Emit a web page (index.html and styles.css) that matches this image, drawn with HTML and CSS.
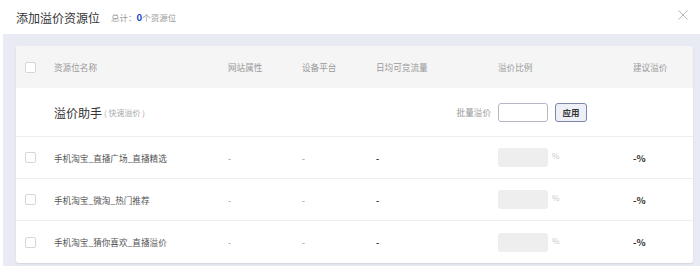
FILE: index.html
```html
<!DOCTYPE html>
<html lang="zh-CN">
<head>
  <meta charset="UTF-8">
  <title>添加溢价资源位</title>
  <link rel="stylesheet" href="styles.css">
</head>
<body>
  <div class="dialog-head">
    <span class="title">添加溢价资源位</span>
    <span class="count">总计：<b>0</b>个资源位</span>
    <span class="close">
      <svg width="10" height="10" viewBox="0 0 10 10"><path d="M0.5 0.5L9.5 9.5M9.5 0.5L0.5 9.5" stroke="#b8b8b8" stroke-width="1"/></svg>
    </span>
  </div>
  <div class="dialog-body">
    <div class="card">
      <div class="row head">
        <div class="cell"><span class="check"></span></div>
        <div class="cell">资源位名称</div>
        <div class="cell">网站属性</div>
        <div class="cell">设备平台</div>
        <div class="cell">日均可竞流量</div>
        <div class="cell">溢价比例</div>
        <div class="cell">建议溢价</div>
      </div>
      <div class="row helper">
        <div class="cell"></div>
        <div class="cell span3"><span class="helper-name">溢价助手</span><span class="helper-tip">( 快速溢价 )</span></div>
        <div class="cell batch-label">批量溢价</div>
        <div class="cell"><input class="batch-input" type="text"><button class="apply">应用</button></div>
        <div class="cell"></div>
      </div>
      <div class="row item">
        <div class="cell"><span class="check"></span></div>
        <div class="cell name">手机淘宝_直播广场_直播精选</div>
        <div class="cell dash">-</div>
        <div class="cell dash">-</div>
        <div class="cell dash strong">-</div>
        <div class="cell"><span class="ratio"></span><span class="pct">%</span></div>
        <div class="cell suggest">-%</div>
      </div>
      <div class="row item">
        <div class="cell"><span class="check"></span></div>
        <div class="cell name">手机淘宝_微淘_热门推荐</div>
        <div class="cell dash">-</div>
        <div class="cell dash">-</div>
        <div class="cell dash strong">-</div>
        <div class="cell"><span class="ratio"></span><span class="pct">%</span></div>
        <div class="cell suggest">-%</div>
      </div>
      <div class="row item last">
        <div class="cell"><span class="check"></span></div>
        <div class="cell name">手机淘宝_猜你喜欢_直播溢价</div>
        <div class="cell dash">-</div>
        <div class="cell dash">-</div>
        <div class="cell dash strong">-</div>
        <div class="cell"><span class="ratio"></span><span class="pct">%</span></div>
        <div class="cell suggest">-%</div>
      </div>
    </div>
  </div>
</body>
</html>
```

FILE: styles.css
```css
body { margin: 0; font-family: "Noto Sans CJK SC", "Noto Sans", sans-serif; background: #fff; color: #333; }
.dialog-head { height: 34px; display: flex; align-items: center; padding-left: 16px; position: relative; }
.title { font-size: 12px; color: #333; }
.count { margin-left: 11px; font-size: 8.5px; color: #999; }
.count b { color: #1d3fd1; font-size: 9.5px; font-weight: bold; }
.close { position: absolute; right: 12px; top: 10px; width: 10px; height: 10px; line-height: 0; }
.dialog-body { margin-left: 3px; height: 232px; background: #e9ebf4; padding: 12px 7px 0 13px; box-sizing: border-box; }
.card { background: #fff; border-radius: 3px; box-shadow: 0 1px 2px #0000001a; overflow: hidden; }
.row { display: grid; grid-template-columns: 38px 174px 74px 74px 122px 135px 1fr; align-items: center; border-bottom: 1px solid #efefef; box-sizing: border-box; }
.row.last { border-bottom: none; }
.cell { font-size: 8.6px; display: flex; align-items: center; white-space: nowrap; }
.head { height: 42px; background: #f5f5f5; border-bottom: none; }
.head .cell { color: #9a9a9a; }
.check { display: inline-block; width: 9px; height: 9px; border: 1px solid #d6d6d6; border-radius: 2px; background: #fff; margin-left: 9px; }
.helper { height: 49px; }
.span3 { grid-column: span 3; }
.helper-name { font-size: 12px; color: #333; }
.helper-tip { font-size: 8px; color: #aaa; margin-left: 2px; }
.batch-label { justify-content: flex-end; padding-right: 7px; color: #999; }
.batch-input { width: 50px; height: 19px; box-sizing: border-box; border: 1px solid #b5b9c4; border-radius: 3px; padding: 0; margin: 0; outline: none; }
.apply { margin-left: 7px; width: 32px; height: 19px; box-sizing: border-box; padding: 0; border: 1px solid #7c88aa; border-radius: 3px; background: #eef0f7; font-family: inherit; font-size: 8.5px; color: #333; font-weight: bold; }
.item { height: 42px; }
.name { color: #555; }
.dash { color: #888; }
.dash.strong { color: #333; font-weight: bold; }
.ratio { display: inline-block; width: 50px; height: 19px; background: #eeeeee; border-radius: 3px; }
.pct { margin-left: 4px; color: #c8c8c8; font-size: 8px; margin-top: -4px; }
.suggest { color: #333; font-weight: bold; font-size: 9.5px; }
```
